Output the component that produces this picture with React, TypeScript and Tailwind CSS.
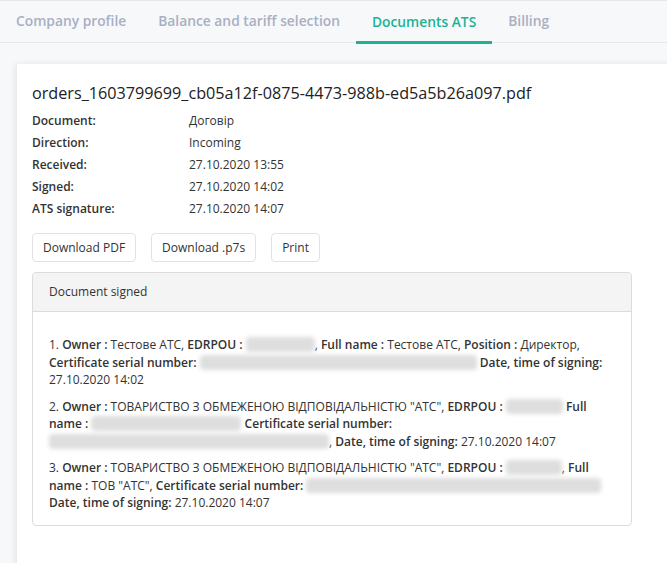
import React from 'react';

const tabs = [
  { label: 'Company profile', active: false },
  { label: 'Balance and tariff selection', active: false },
  { label: 'Documents ATS', active: true },
  { label: 'Billing', active: false },
];

const details = [
  ['Document:', 'Договір'],
  ['Direction:', 'Incoming'],
  ['Received:', '27.10.2020 13:55'],
  ['Signed:', '27.10.2020 14:02'],
  ['ATS signature:', '27.10.2020 14:07'],
];

// blurred (hidden) value
const Hidden = ({ w }: { w: number }) => (
  <span
    className="inline-block h-[15px] align-[-3px] rounded-sm bg-[#dedede] blur-[2px]"
    style={{ width: w }}
  />
);

const B = ({ children }: { children: React.ReactNode }) => (
  <span className="font-semibold">{children}</span>
);

export default function App() {
  return (
    <div
      className="h-[563px] w-[667px] overflow-hidden bg-[#f7f8fa] text-[#333]"
      style={{ fontFamily: '"Open Sans", sans-serif' }}
    >
      {/* Tabs */}
      <div className="flex h-[43px] border-y border-[#e4e7eb]">
        {tabs.map((t) => (
          <div
            key={t.label}
            className={`flex items-center px-4 text-[13.8px] font-semibold ${
              t.active
                ? 'border-b-[3px] border-[#1ab394] pt-[3px] text-[#1ab394] -mb-[2px]'
                : 'text-[#a8b0c2]'
            }`}
          >
            {t.label}
          </div>
        ))}
      </div>

      {/* Card */}
      <div className="pl-[17px] pt-[21px]">
        <div className="h-[520px] w-[680px] bg-white px-[15px] pt-[17px] shadow-[-2px_0_6px_rgba(0,0,0,0.08)]">
          <h1 className="text-[16.2px] leading-6 text-[#222]">
            orders_1603799699_cb05a12f-0875-4473-988b-ed5a5b26a097.pdf
          </h1>

          <div className="mt-[5px] text-[12px]">
            {details.map(([k, v]) => (
              <div key={k} className="flex h-[22px] items-center">
                <div className="w-[157px] font-semibold">{k}</div>
                <div>{v}</div>
              </div>
            ))}
          </div>

          <div className="mt-[13px] flex gap-[15px] text-[12px]">
            {['Download PDF', 'Download .p7s', 'Print'].map((b) => (
              <button
                key={b}
                className="h-[29px] rounded-sm border border-[#e2e2e2] bg-white px-[10px]"
              >
                {b}
              </button>
            ))}
          </div>

          <div className="mt-[10px] w-[600px] overflow-hidden rounded border border-[#dcdcdc] text-[12px]">
            <div className="flex h-[39px] items-center border-b border-[#dcdcdc] bg-[#f4f4f4] px-4">
              Document signed
            </div>
            <div className="px-4 pb-[13px] pt-[24px] leading-[17.5px]">
              <p>
                1. <B>Owner :</B> Тестове АТС, <B>EDRPOU :</B> <Hidden w={69} />,{' '}
                <B>Full name :</B> Тестове АТС, <B>Position :</B> Директор,{' '}
                <B>Certificate serial number:</B> <Hidden w={277} />{' '}
                <B>Date, time of signing:</B> 27.10.2020 14:02
              </p>
              <p className="mt-[9px]">
                2. <B>Owner :</B> ТОВАРИСТВО З ОБМЕЖЕНОЮ ВІДПОВІДАЛЬНІСТЮ "АТС", <B>EDRPOU :</B>{' '}
                <Hidden w={57} /> <B>Full name :</B> <Hidden w={150} />{' '}
                <B>Certificate serial number:</B> <Hidden w={280} />, <B>Date, time of signing:</B>{' '}
                27.10.2020 14:07
              </p>
              <p className="mt-[9px]">
                3. <B>Owner :</B> ТОВАРИСТВО З ОБМЕЖЕНОЮ ВІДПОВІДАЛЬНІСТЮ "АТС", <B>EDRPOU :</B>{' '}
                <Hidden w={56} />, <B>Full name :</B> ТОВ "АТС", <B>Certificate serial number:</B>{' '}
                <Hidden w={295} /> <B>Date, time of signing:</B> 27.10.2020 14:07
              </p>
            </div>
          </div>
        </div>
      </div>
    </div>
  );
}
